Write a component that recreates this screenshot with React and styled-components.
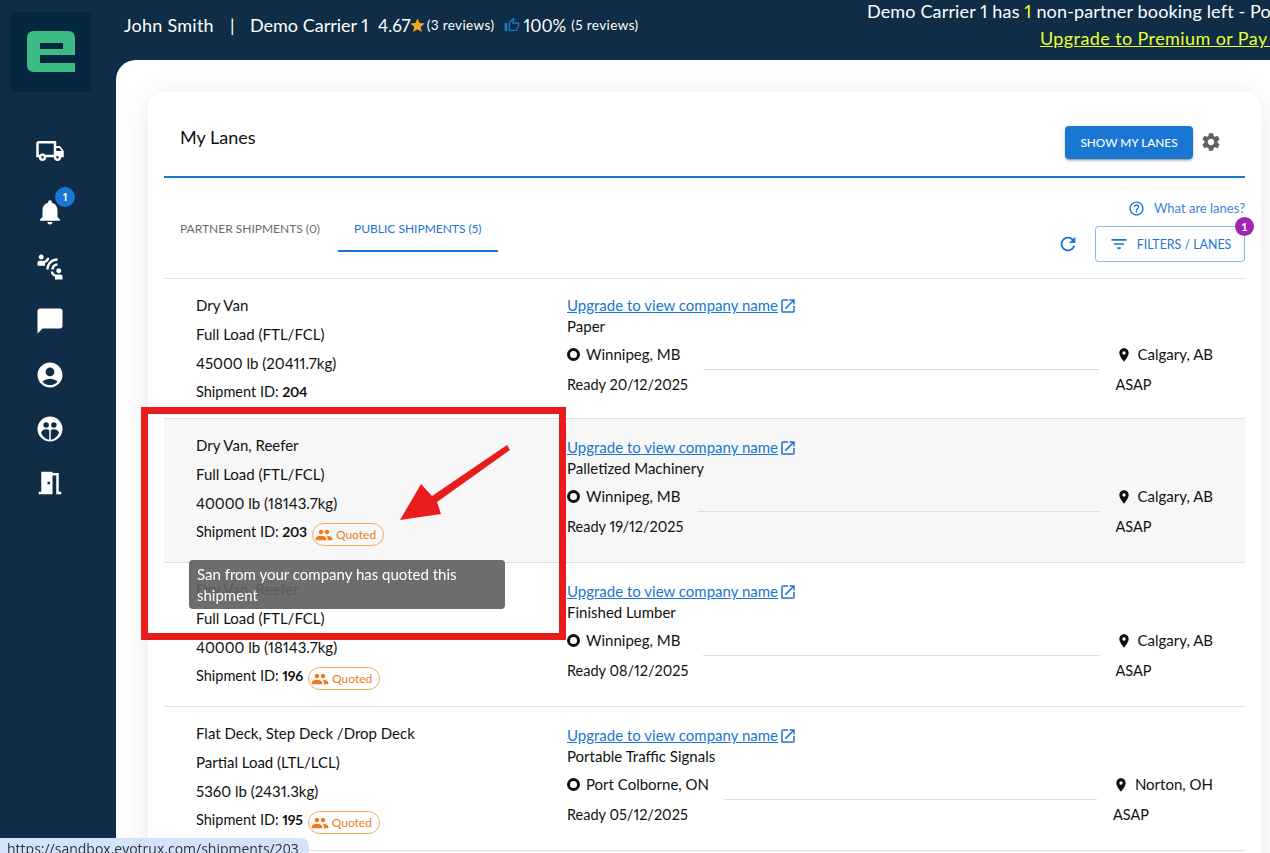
import React from "react";
import styled, { createGlobalStyle } from "styled-components";
import {
  MdOutlineLocalShipping,
  MdNotifications,
  MdConnectWithoutContact,
  MdChatBubble,
  MdAccountCircle,
  MdMeetingRoom,
  MdStar,
  MdOutlineThumbUp,
  MdSettings,
  MdHelpOutline,
  MdRefresh,
  MdFilterList,
  MdPeople,
  MdOpenInNew,
  MdLocationOn,
} from "react-icons/md";

const FONT = `"Lato", "Open Sans", sans-serif`;

const shipments = [
  {
    id: 204,
    equipment: "Dry Van",
    load: "Full Load (FTL/FCL)",
    weight: "45000 lb (20411.7kg)",
    commodity: "Paper",
    origin: "Winnipeg, MB",
    destination: "Calgary, AB",
    ready: "Ready 20/12/2025",
  },
  {
    id: 203,
    equipment: "Dry Van, Reefer",
    load: "Full Load (FTL/FCL)",
    weight: "40000 lb (18143.7kg)",
    commodity: "Palletized Machinery",
    origin: "Winnipeg, MB",
    destination: "Calgary, AB",
    ready: "Ready 19/12/2025",
    quoted: true,
    hovered: true,
  },
  {
    id: 196,
    equipment: "Dry Van, Reefer",
    load: "Full Load (FTL/FCL)",
    weight: "40000 lb (18143.7kg)",
    commodity: "Finished Lumber",
    origin: "Winnipeg, MB",
    destination: "Calgary, AB",
    ready: "Ready 08/12/2025",
    quoted: true,
  },
  {
    id: 195,
    equipment: "Flat Deck, Step Deck /Drop Deck",
    load: "Partial Load (LTL/LCL)",
    weight: "5360 lb (2431.3kg)",
    commodity: "Portable Traffic Signals",
    origin: "Port Colborne, ON",
    destination: "Norton, OH",
    ready: "Ready 05/12/2025",
    quoted: true,
  },
];

function PartnersIcon() {
  return (
    <svg width="30" height="30" viewBox="0 0 24 24">
      <circle cx="12" cy="12" r="10" fill="#fff" />
      <g fill="#0f2d46">
        <circle cx="8.9" cy="8.8" r="2.2" />
        <circle cx="15.1" cy="8.8" r="2.2" />
        <path d="M4.8 14.7c.8-1.6 2.4-2.5 4-2.5 1 0 2 .3 2.6.9v7.5a8.8 8.8 0 0 1-6.6-5.9z" />
        <path d="M19.2 14.7c-.8-1.6-2.4-2.5-4-2.5-1 0-2 .3-2.6.9v7.5a8.8 8.8 0 0 0 6.6-5.9z" />
      </g>
    </svg>
  );
}

function Logo() {
  return (
    <LogoBox>
      <svg width="80" height="80" viewBox="0 0 80 80">
        <path
          fill="#3dbb85"
          fillRule="evenodd"
          d="M23 19H57Q64 19 64 26V43H29V51H64V60H23Q16 60 16 53V26Q16 19 23 19ZM29 31V37H52V31Z"
        />
      </svg>
    </LogoBox>
  );
}

function Sidebar() {
  return (
    <Side>
      <Logo />
      <Nav>
        <NavItem>
          <MdOutlineLocalShipping size={30} />
        </NavItem>
        <NavItem $spaced>
          <MdNotifications size={30} />
          <NavBadge>1</NavBadge>
        </NavItem>
        <NavItem>
          <MdConnectWithoutContact size={30} />
        </NavItem>
        <NavItem>
          <MdChatBubble size={30} />
        </NavItem>
        <NavItem>
          <MdAccountCircle size={30} />
        </NavItem>
        <NavItem>
          <PartnersIcon />
        </NavItem>
        <NavItem>
          <MdMeetingRoom size={30} />
        </NavItem>
      </Nav>
    </Side>
  );
}

function Header() {
  return (
    <Top>
      <Identity>
        <UserName>John Smith</UserName>
        <Pipe>|</Pipe>
        <Carrier>Demo Carrier 1</Carrier>
        <Score>4.67</Score>
        <StarWrap>
          <MdStar size={17} color="#f5a623" />
        </StarWrap>
        <Reviews>(3 reviews)</Reviews>
        <ThumbWrap>
          <MdOutlineThumbUp size={16} color="#1976d2" />
        </ThumbWrap>
        <Score>100%</Score>
        <Reviews $wide>(5 reviews)</Reviews>
      </Identity>
      <Notice>
        <NoticeLine>
          Demo Carrier 1 has <Yellow>1</Yellow> non-partner booking left - Post a
        </NoticeLine>
        <UpgradeLink>Upgrade to Premium or Pay as you go</UpgradeLink>
      </Notice>
    </Top>
  );
}

function ShipmentRow({ item }) {
  return (
    <Row $hovered={item.hovered}>
      <Details>
        <Line>{item.equipment}</Line>
        <Line>{item.load}</Line>
        <Line>{item.weight}</Line>
        <IdLine $quoted={item.quoted}>
          <span>
            Shipment ID: <b>{item.id}</b>
          </span>
          {item.quoted && (
            <Chip>
              <MdPeople size={18} />
              Quoted
            </Chip>
          )}
        </IdLine>
        {item.hovered && <Tooltip>San from your company has quoted this shipment</Tooltip>}
      </Details>
      <Trip>
        <CompanyLink>
          <u>Upgrade to view company name</u>
          <MdOpenInNew size={18} />
        </CompanyLink>
        <Commodity>{item.commodity}</Commodity>
        <Route>
          <Stop>
            <Place>
              <Ring />
              {item.origin}
            </Place>
            <When>{item.ready}</When>
          </Stop>
          <RouteLine />
          <Stop>
            <Place>
              <MdLocationOn size={16} />
              {item.destination}
            </Place>
            <When>ASAP</When>
          </Stop>
        </Route>
      </Trip>
    </Row>
  );
}

export default function App() {
  return (
    <>
      <GlobalStyle />
      <Shell>
        <Sidebar />
        <Main>
          <Header />
          <Panel>
            <Card>
              <CardHead>
                <Title>My Lanes</Title>
                <HeadActions>
                  <PrimaryButton>Show my lanes</PrimaryButton>
                  <MdSettings size={22} color="#616161" />
                </HeadActions>
              </CardHead>
              <Toolbar>
                <Tabs>
                  <Tab>Partner Shipments (0)</Tab>
                  <Tab $active>Public Shipments (5)</Tab>
                </Tabs>
                <Tools>
                  <HelpLink>
                    <MdHelpOutline size={17} />
                    <span>What are lanes?</span>
                  </HelpLink>
                  <ToolRow>
                    <MdRefresh size={22} color="#1976d2" />
                    <FilterButton>
                      <MdFilterList size={20} />
                      Filters / Lanes
                      <FilterBadge>1</FilterBadge>
                    </FilterButton>
                  </ToolRow>
                </Tools>
              </Toolbar>
              <List>
                {shipments.map((item) => (
                  <ShipmentRow key={item.id} item={item} />
                ))}
              </List>
            </Card>
          </Panel>
        </Main>
      </Shell>
      <Callout />
      <CalloutArrow width="130" height="90" viewBox="0 0 130 90">
        <polygon points="117,15 120,20 47,72 51,84 10,90 31,54 42,66" fill="#e91c1c" />
      </CalloutArrow>
      <StatusBar>https://sandbox.evotrux.com/shipments/203</StatusBar>
    </>
  );
}

const GlobalStyle = createGlobalStyle`
  html, body {
    margin: 0;
    height: 100%;
    overflow: hidden;
  }
  body {
    font-family: ${FONT};
    font-variant-numeric: proportional-nums;
    color: #111;
  }
  * {
    box-sizing: border-box;
  }
`;

const Shell = styled.div`
  display: flex;
  height: 853px;
  overflow: hidden;
  background: #0f2d46;
`;

const Side = styled.aside`
  flex: 0 0 101px;
  padding-top: 12px;
  border-right: 1px solid #0c2a41;
`;

const LogoBox = styled.div`
  width: 80px;
  height: 80px;
  margin-left: 11px;
  background: #05263f;
  svg {
    display: block;
  }
`;

const Nav = styled.nav`
  display: flex;
  flex-direction: column;
  margin-top: 32px;
`;

const NavItem = styled.div`
  position: relative;
  display: flex;
  align-items: center;
  justify-content: center;
  height: ${(p) => (p.$spaced ? "56px" : "54px")};
  margin-top: ${(p) => (p.$spaced ? "6px" : "0")};
  color: #fff;
`;

const NavBadge = styled.span`
  position: absolute;
  top: 3px;
  left: 55px;
  width: 20px;
  height: 20px;
  border-radius: 50%;
  background: #1976d2;
  color: #fff;
  font-size: 11px;
  font-weight: 700;
  line-height: 20px;
  text-align: center;
`;

const Main = styled.div`
  flex: 1;
  min-width: 0;
  display: flex;
  flex-direction: column;
`;

const Top = styled.header`
  flex: 0 0 60px;
  display: flex;
  justify-content: space-between;
  color: #fff;
  overflow: hidden;
`;

const Identity = styled.div`
  display: flex;
  align-items: center;
  height: 50px;
  padding-left: 23px;
  white-space: nowrap;
`;

const UserName = styled.span`
  font-size: 18px;
  letter-spacing: 0.25px;
  width: 106px;
`;

const Pipe = styled.span`
  font-size: 18px;
  width: 20px;
`;

const Carrier = styled.span`
  font-size: 18px;
  width: 128px;
`;

const Score = styled.span`
  font-size: 17px;
`;

const StarWrap = styled.span`
  display: flex;
  margin-left: -2px;
`;

const Reviews = styled.span`
  font-size: 13.5px;
  letter-spacing: 0.4px;
  margin-left: ${(p) => (p.$wide ? "5px" : "1px")};
`;

const ThumbWrap = styled.span`
  display: flex;
  margin: 0 3px 0 10px;
`;

const Notice = styled.div`
  flex: 0 0 403px;
  overflow: hidden;
  white-space: nowrap;
  font-size: 18px;
`;

const NoticeLine = styled.div`
  height: 27px;
  line-height: 22px;
  letter-spacing: 0.15px;
`;

const Yellow = styled.span`
  color: #ecff2e;
`;

const UpgradeLink = styled.div`
  padding-left: 173px;
  color: #ecff2e;
  letter-spacing: 0.4px;
  text-decoration: underline;
  line-height: 22px;
`;

const Panel = styled.main`
  flex: 1;
  min-height: 0;
  margin-left: 15px;
  padding: 32px 9px 0 32px;
  background: #fff;
  border-top-left-radius: 20px;
  overflow: hidden;
`;

const Card = styled.section`
  background: #fff;
  border-radius: 16px;
  box-shadow: 0 2px 32px rgba(0, 0, 0, 0.09);
  padding: 0 16px;
  height: 900px;
`;

const CardHead = styled.div`
  display: flex;
  align-items: center;
  justify-content: space-between;
  height: 86px;
  padding: 16px 23px 0 16px;
  border-bottom: 2px solid #1976d2;
`;

const Title = styled.h2`
  margin: 0 0 10px;
  font-size: 18px;
  font-weight: 400;
`;

const HeadActions = styled.div`
  display: flex;
  align-items: center;
  gap: 7px;
`;

const PrimaryButton = styled.button`
  width: 128px;
  height: 33px;
  border: 0;
  border-radius: 4px;
  background: #1976d2;
  box-shadow: 0 3px 1px -2px rgba(0, 0, 0, 0.2), 0 2px 2px rgba(0, 0, 0, 0.14), 0 1px 5px rgba(0, 0, 0, 0.12);
  color: #fff;
  font: 500 11.8px ${FONT};
  text-transform: uppercase;
`;

const Toolbar = styled.div`
  display: flex;
  justify-content: space-between;
  height: 100px;
`;

const Tabs = styled.div`
  display: flex;
  align-items: flex-start;
  padding-top: 26px;
`;

const Tab = styled.div`
  display: flex;
  align-items: center;
  height: 48px;
  padding: 3px 16px 0;
  min-width: ${(p) => (p.$active ? "160px" : "174px")};
  border-bottom: 2px solid ${(p) => (p.$active ? "#1976d2" : "transparent")};
  color: ${(p) => (p.$active ? "#1976d2" : "#6b6b6b")};
  font-size: 12px;
  text-transform: uppercase;
  white-space: nowrap;
`;

const Tools = styled.div`
  display: flex;
  flex-direction: column;
  align-items: flex-end;
  padding-top: 21px;
`;

const HelpLink = styled.div`
  display: flex;
  align-items: center;
  gap: 9px;
  height: 18px;
  color: #1976d2;
  font-size: 13px;
  span {
    color: #3c85d6;
  }
`;

const ToolRow = styled.div`
  display: flex;
  align-items: center;
  gap: 16px;
  margin-top: 9px;
`;

const FilterButton = styled.button`
  position: relative;
  display: flex;
  align-items: center;
  justify-content: center;
  gap: 8px;
  width: 150px;
  height: 36px;
  background: #fff;
  border: 1px solid rgba(25, 118, 210, 0.5);
  border-radius: 4px;
  color: #1976d2;
  font: 400 12.4px ${FONT};
  text-transform: uppercase;
`;

const FilterBadge = styled.span`
  position: absolute;
  top: -10px;
  right: -10px;
  width: 19px;
  height: 19px;
  border-radius: 50%;
  background: #9c27b0;
  color: #fff;
  font-size: 11px;
  font-weight: 700;
  line-height: 19px;
`;

const List = styled.div`
  border-top: 1px solid #e0e0e0;
`;

const Row = styled.article`
  display: flex;
  align-items: center;
  padding-right: 32px;
  border-bottom: 1px solid #e0e0e0;
  background: ${(p) => (p.$hovered ? "#f7f7f7" : "#fff")};
`;

const Details = styled.div`
  position: relative;
  flex: 0 0 403px;
  padding: 12px 0 11px 32px;
  font-size: 15px;
`;

const Line = styled.div`
  line-height: 29px;
`;

const IdLine = styled.div`
  display: flex;
  align-items: center;
  gap: 5px;
  min-height: ${(p) => (p.$quoted ? "33px" : "29px")};
  b {
    font-size: 14px;
    font-weight: 700;
    letter-spacing: -0.3px;
  }
  span {
    font-size: 14.5px;
    margin-top: ${(p) => (p.$quoted ? "-6px" : "-2px")};
  }
`;

const Chip = styled.div`
  display: flex;
  align-items: center;
  gap: 3px;
  height: 23px;
  padding: 0 7px 0 2px;
  border: 1px solid #f7a45e;
  border-radius: 12px;
  color: #ef7b1a;
  font-size: 12px;
`;

const Tooltip = styled.div`
  position: absolute;
  top: calc(100% - 2px);
  left: 25px;
  width: 316px;
  padding: 4px 8px 3px;
  border-radius: 4px;
  background: rgba(97, 97, 97, 0.92);
  color: #fff;
  font-size: 15px;
  line-height: 21px;
  z-index: 2;
`;

const Trip = styled.div`
  flex: 1;
  min-width: 0;
  padding-bottom: 7px;
  font-size: 15px;
  line-height: 21px;
`;

const CompanyLink = styled.div`
  display: flex;
  align-items: center;
  height: 21px;
  gap: 1px;
  color: #1976d2;
`;

const Commodity = styled.div``;

const Route = styled.div`
  display: flex;
  margin-top: 7px;
`;

const Stop = styled.div`
  flex: none;
`;

const Place = styled.div`
  display: flex;
  align-items: center;
  gap: 6px;
`;

const Ring = styled.span`
  width: 13px;
  height: 13px;
  border: 3px solid #111;
  border-radius: 50%;
`;

const When = styled.div`
  margin-top: 9px;
  font-size: 14.5px;
`;

const RouteLine = styled.div`
  flex: 1;
  height: 1px;
  margin: 25px 16px 0 15px;
  background: #ddd;
`;

const Callout = styled.div`
  position: fixed;
  left: 141px;
  top: 407px;
  width: 425px;
  height: 233px;
  border: 7px solid #e91c1c;
  pointer-events: none;
`;

const CalloutArrow = styled.svg`
  position: fixed;
  left: 390px;
  top: 430px;
  width: 130px;
  height: 90px;
`;

const StatusBar = styled.div`
  position: fixed;
  left: 0;
  bottom: 0;
  width: 309px;
  height: 15px;
  padding: 3px 0 0 7px;
  overflow: hidden;
  border-top-right-radius: 8px;
  background: #d3e3fd;
  color: #333;
  font: 14px/16px "Open Sans", sans-serif;
  white-space: nowrap;
`;
